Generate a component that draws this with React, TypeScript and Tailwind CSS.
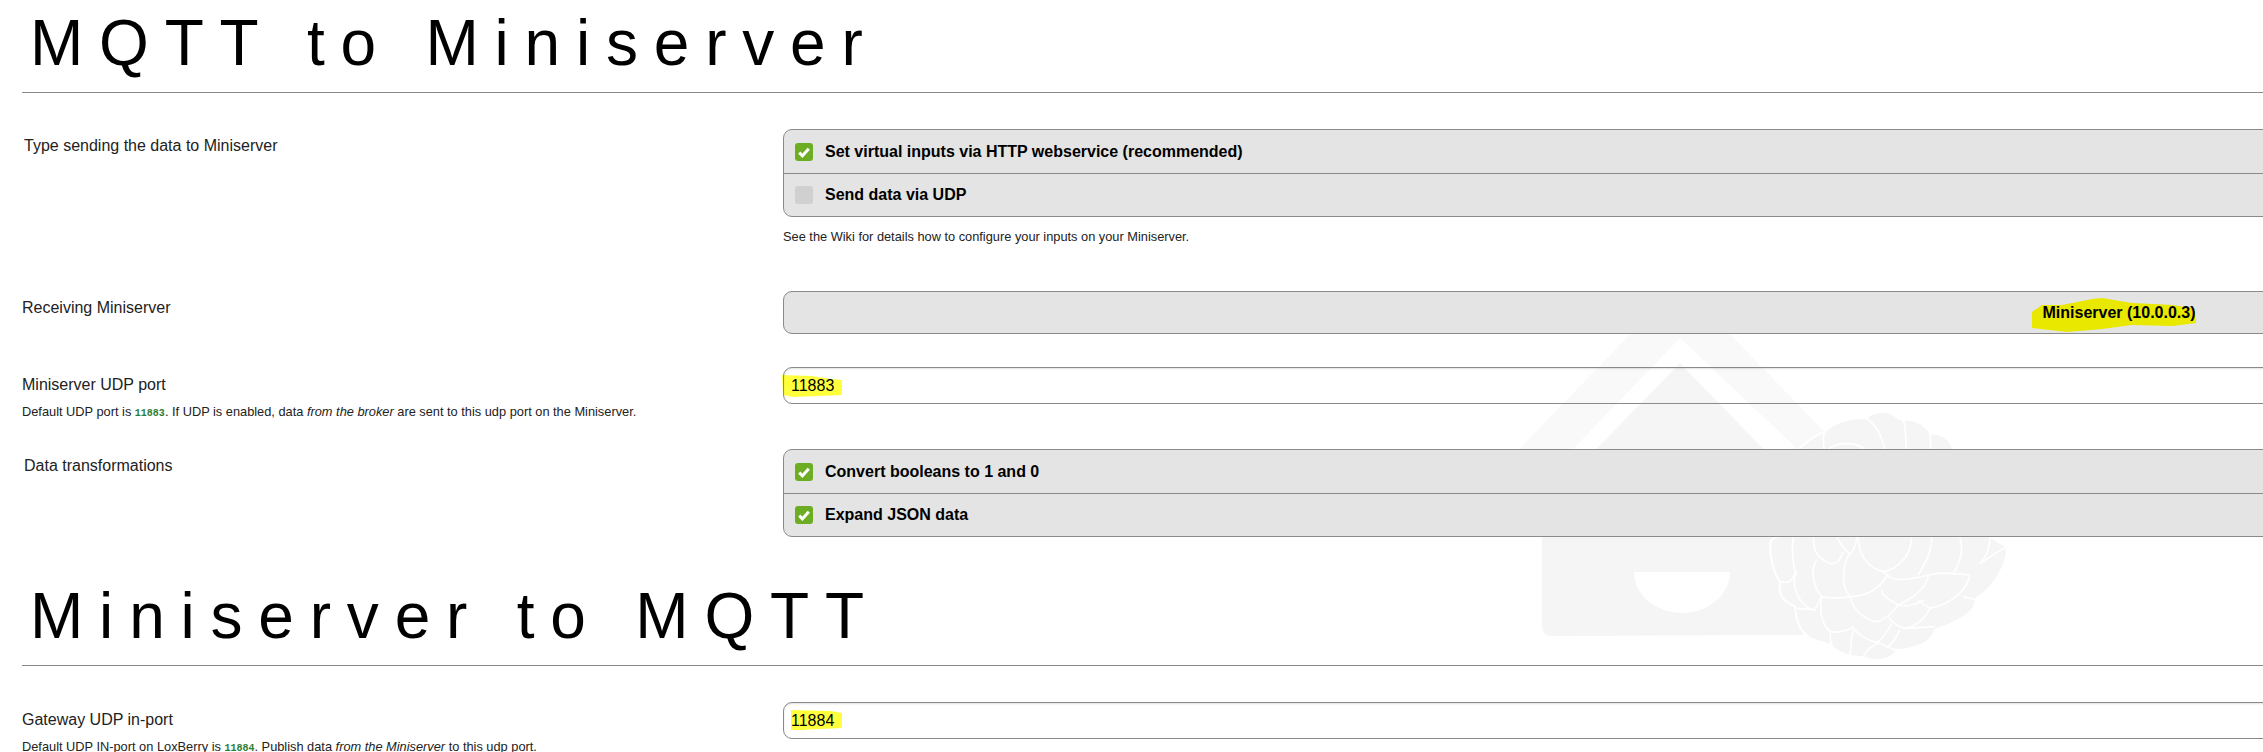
const sans = "font-['Liberation_Sans',Arial,sans-serif]";
const labelCol = "w-[761px] shrink-0";

function Check({ on }: { on: boolean }) {
  return (
    <span className={`flex h-[18px] w-[18px] shrink-0 items-center justify-center rounded-[3px] ${on ? "bg-[#6dad23]" : "bg-[#d0d0d0]"}`}>
      {on && (
        <svg viewBox="0 0 18 18" className="h-[18px] w-[18px]">
          <path d="M4.2 9.6l3.2 3.2 6.4-7" fill="none" stroke="#fff" strokeWidth="3" />
        </svg>
      )}
    </span>
  );
}

function Options({ items }: { items: { label: string; on: boolean }[] }) {
  return (
    <div className="relative w-[2672px] shrink-0 rounded-[9px] border border-[#8a8a8a] bg-[#e4e4e4]">
      {items.map((item, i) => (
        <div key={item.label} className={`flex h-[43px] items-center gap-3 pl-[11px] text-base font-bold text-black ${i > 0 ? "border-t border-[#8a8a8a]" : ""}`}>
          <Check on={item.on} />
          {item.label}
        </div>
      ))}
    </div>
  );
}

function PortInput({ value, mark }: { value: string; mark: string }) {
  return (
    <div className="relative h-[37px] w-[2672px] shrink-0">
      <svg className="absolute left-[-2px] top-[8px]" width="62" height="24" viewBox="0 0 62 24">
        <path d={mark} fill="#ffff3c" />
      </svg>
      <input readOnly value={value} className="relative h-[37px] w-full rounded-[9px] border border-[#8a8a8a] bg-transparent pl-[7px] text-base text-black shadow-[inset_0_1px_2px_rgba(0,0,0,0.12)] outline-none" />
    </div>
  );
}

function Code({ children }: { children: string }) {
  return <code className="font-['Liberation_Mono',monospace] text-[10px] font-bold text-[#2e7d32]">{children}</code>;
}

function Title({ children }: { children: string }) {
  return (
    <div className="border-b border-[#8a8a8a] pb-[12px]">
      <h1 className="pl-[8px] text-[64px] leading-[74px] tracking-[15.8px] text-black">{children}</h1>
    </div>
  );
}

const berryOutline =
  "M150 145 C175 120 200 105 225 95 C245 70 300 50 350 55 C360 35 410 30 425 42 C440 50 450 58 460 60 C490 55 525 70 540 100 C570 100 605 115 610 150 L720 410 L770 440 C775 480 745 550 680 595 L670 625 C650 650 600 675 555 690 C550 715 520 745 440 750 C435 770 400 782 380 780 C360 780 345 775 340 770 C310 775 270 760 250 745 L240 735 C210 725 190 720 180 715 C160 700 140 680 135 620 C115 610 100 600 95 590 C85 570 90 555 90 545 C70 520 60 470 60 430 C65 415 80 410 90 410 Z";

const berryLines = [
  "M225 95 C215 110 222 130 222 148",
  "M350 55 C390 85 395 120 405 148",
  "M460 60 C468 90 468 120 468 148",
  "M540 100 L543 148",
  "M235 148 C260 125 320 125 345 148",
  "M130 410 C125 450 125 490 140 525",
  "M190 410 C190 450 200 475 240 490 C265 495 270 475 280 455",
  "M260 410 C270 435 290 450 300 465 C315 440 320 430 320 410",
  "M325 410 C325 460 350 505 400 515 C450 505 485 460 485 410",
  "M545 410 C545 460 525 490 505 525",
  "M630 410 C640 450 630 490 610 520",
  "M720 410 C720 440 710 470 690 490 C720 470 750 450 770 440",
  "M295 465 C275 510 275 560 300 590 C340 590 390 570 412 525 L400 515",
  "M412 525 C430 545 480 540 535 525 C570 515 600 520 660 525",
  "M200 480 C180 510 190 560 215 590 C240 595 270 595 300 590",
  "M135 520 C125 560 150 625 195 630 L215 590",
  "M90 545 C110 550 120 550 135 525",
  "M535 525 C530 560 500 590 445 615 C420 600 395 590 395 570",
  "M300 590 C310 640 360 665 385 665 C420 650 435 625 445 615",
  "M660 525 C650 570 610 610 540 625 C520 615 510 605 505 600",
  "M445 615 C470 620 500 615 520 600",
  "M540 625 C530 650 500 680 465 685 C440 680 425 665 415 650",
  "M215 590 C210 630 210 665 240 695 C265 700 300 690 310 680",
  "M140 625 L195 630",
  "M310 685 C330 710 370 730 385 725 C410 700 420 680 425 670",
  "M240 700 C240 720 245 740 250 745",
  "M465 685 L555 680",
  "M310 690 C305 710 302 740 300 765",
  "M340 770 C350 750 370 735 385 728 C400 735 430 750 440 750",
  "M450 690 C440 710 425 730 415 740",
  "M640 590 L680 600",
];

function Watermark() {
  return (
    <svg className="absolute left-[1500px] top-[280px]" width="520" height="390" viewBox="1500 280 520 390">
      <path d="M1671 292 H1689 L1850 458 L1825 475 L1680 338 L1500 525 L1470 500 Z" fill="#f9f9f9" />
      <path d="M1680 363 L1830 518 L1803 635 L1552 636 Q1542 636 1542 626 L1542 505 Z" fill="#f5f5f5" />
      <path d="M1634 572 H1730 A48 41 0 0 1 1634 572 Z" fill="#fff" />
      <g transform="translate(1750 400) scale(0.3333)">
        <path d={berryOutline} fill="#f5f5f5" stroke="#fff" strokeWidth="6" />
        {berryLines.map((d) => (
          <path key={d} d={d} fill="none" stroke="#fff" strokeWidth="5" />
        ))}
      </g>
    </svg>
  );
}

export default function App() {
  return (
    <div className={`relative h-[752px] w-full overflow-hidden bg-white pl-[22px] pt-[6px] ${sans}`}>
      <Watermark />
      <div className="relative">
        <Title>MQTT to Miniserver</Title>

        <div className="mt-[36px] flex">
          <div className={`${labelCol} pl-[2px] pt-[7px] text-base leading-5 text-[#222]`}>Type sending the data to Miniserver</div>
          <div>
            <Options items={[
              { label: "Set virtual inputs via HTTP webservice (recommended)", on: true },
              { label: "Send data via UDP", on: false },
            ]} />
            <p className="mt-[13px] h-[14px] text-[12.8px] leading-[14px] text-[#222]">See the Wiki for details how to configure your inputs on your Miniserver.</p>
          </div>
        </div>

        <div className="mt-[47px] flex">
          <div className={`${labelCol} pt-[7px] text-base leading-5 text-[#222]`}>Receiving Miniserver</div>
          <div className="relative h-[43px] w-[2672px] shrink-0 rounded-[9px] border border-[#8a8a8a] bg-[#e4e4e4]">
            <div className="absolute inset-0 flex items-center justify-center font-bold text-black">
              <span className="relative">
                <svg className="absolute left-[-11px] top-[-3px]" width="166" height="35" viewBox="0 0 166 35">
                  <path d="M0 14 L10 7 L30 7 L60 1 L70 0 L100 5 L140 7 L162 10 L164 25 L140 28 L100 27 L70 31 L35 34 L0 30 Z" fill="#e8e800" />
                </svg>
                <span className="relative">Miniserver (10.0.0.3)</span>
              </span>
            </div>
          </div>
        </div>

        <div className="mt-[33px] flex">
          <div className={labelCol}>
            <div className="pt-[8px] text-base leading-5 text-[#222]">Miniserver UDP port</div>
            <p className="mt-[10px] h-[14px] text-[12.8px] leading-[14px] text-[#222]">
              Default UDP port is <Code>11883</Code>. If UDP is enabled, data <em>from the broker</em> are sent to this udp port on the Miniserver.
            </p>
          </div>
          <PortInput value="11883" mark="M1 0 L30 1 L50 4 L61 5 L61 20 L12 22 L2 20 Z" />
        </div>

        <div className="mt-[30px] flex">
          <div className={`${labelCol} pl-[2px] pt-[7px] text-base leading-5 text-[#222]`}>Data transformations</div>
          <Options items={[
            { label: "Convert booleans to 1 and 0", on: true },
            { label: "Expand JSON data", on: true },
          ]} />
        </div>

        <div className="mt-[42px]">
          <Title>Miniserver to MQTT</Title>
        </div>

        <div className="mt-[36px] flex">
          <div className={labelCol}>
            <div className="pt-[8px] text-base leading-5 text-[#222]">Gateway UDP in-port</div>
            <p className="mt-[10px] h-[14px] text-[12.8px] leading-[14px] text-[#222]">
              Default UDP IN-port on LoxBerry is <Code>11884</Code>. Publish data <em>from the Miniserver</em> to this udp port.
            </p>
          </div>
          <PortInput value="11884" mark="M10 0 L50 1 L61 3 L61 18 L20 20 L10 20 Z" />
        </div>
      </div>
    </div>
  );
}
